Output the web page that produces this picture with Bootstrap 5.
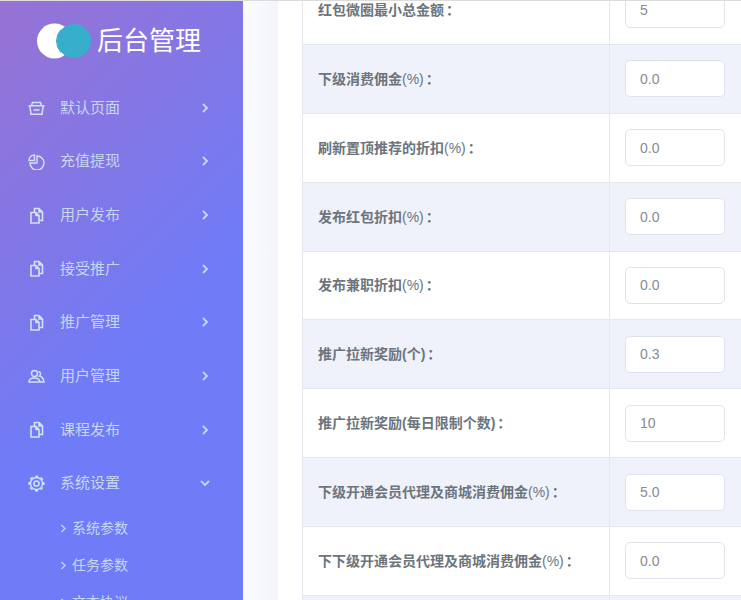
<!DOCTYPE html>
<html lang="zh-CN">
<head>
<meta charset="utf-8">
<title>后台管理</title>
<link href="https://cdn.jsdelivr.net/npm/bootstrap@5.3.0/dist/css/bootstrap.min.css" rel="stylesheet">
<style>
html,body{height:600px;overflow:hidden}
body{font-family:"Liberation Sans","Noto Sans CJK SC",sans-serif;background:#fff;border-top:1px solid #dcdcdc;margin:0}
.shell{height:599px;overflow:hidden}
.side-bar{width:243px;flex:none;background:linear-gradient(135deg,#9872d3 0%,#6f7bf7 58%,#6f7bf7 100%);overflow:hidden}
.brand-row{height:80px;padding-left:37px;gap:6px}
.brand-logo{width:54px;height:36px;flex:none}
.brand-name{font-size:26px;color:#fff;line-height:1}
.menu-item{height:53.67px;padding-left:28px;padding-right:33px;color:#c6d6ef;font-size:15px;text-decoration:none}
.menu-ico{width:17px;height:17px;flex:none;margin-right:15px}
.menu-arrow{width:10px;height:10px;flex:none}
.sub-item{height:37px;padding-left:60px;color:#c6d6ef;font-size:14px;text-decoration:none}
.sub-arrow{width:7px;height:9px;margin-right:5px;flex:none}
.grad-band{width:35px;flex:none;background:linear-gradient(90deg,#fbfbff,#f3f5fa)}
.content-pane{padding-left:24px;flex:1;min-width:0;overflow:hidden}
.cfg-table{width:530px;margin-top:-26px;margin-bottom:0;table-layout:fixed;--bs-table-border-color:#e3e8ef;--bs-table-color:#6c757d}
.cfg-table td{height:68.875px;padding:0 15px;vertical-align:middle;color:#6c757d;font-size:14px;font-weight:700}
.cfg-table td:first-child{width:307px}
.row-alt{--bs-table-bg:#eff2fa}
.cfg-table .pct{font-weight:400}
.cfg-table .colon{font-family:"Noto Sans CJK TC",sans-serif;padding-left:2px}
.cfg-input{width:100px;height:37px;border:1px solid #dfe4ec;border-radius:5px;padding:0 14px;font-size:14px;font-family:"Liberation Sans",sans-serif;color:#868c93;font-weight:400;background:#fff;box-shadow:none}
</style>
</head>
<body>
<div class="shell d-flex">
  <aside class="side-bar">
    <div class="brand-row d-flex align-items-center">
      <svg class="brand-logo" viewBox="0 0 54 36"><circle cx="17.500" cy="18" r="17.500" fill="#fff"/><circle cx="37" cy="18" r="17" fill="#38aecd"/><path d="M24 6.500a17 17 0 0 0 0 23" fill="none" stroke="#3a9fc9" stroke-width="1"/></svg>
      <span class="brand-name">后台管理</span>
    </div>
    <nav>
      <a class="menu-item d-flex align-items-center" href="#">
        <svg class="menu-ico" viewBox="0 0 17 17" fill="none" stroke="#d2e2f3" stroke-width="1.500"><path d="M3.500 6.500l1-3h8l1 3M.5 6.800h16M1.800 6.800l1.200 8.400h11l1.200-8.400M5.500 11h6"/></svg>
        <span class="flex-grow-1">默认页面</span>
        <svg class="menu-arrow" viewBox="0 0 10 10" fill="none" stroke="#c8d5f6" stroke-width="1.800"><path d="M3 1l4 4-4 4"/></svg>
      </a>
      <a class="menu-item d-flex align-items-center" href="#">
        <svg class="menu-ico" viewBox="0 0 17 17" fill="none" stroke="#d2e2f3" stroke-width="1.400"><path d="M9 3a7 7 0 1 1-7 7h7zM1 7.500a5.500 5.500 0 0 1 5.500-5.500v5.500z"/></svg>
        <span class="flex-grow-1">充值提现</span>
        <svg class="menu-arrow" viewBox="0 0 10 10" fill="none" stroke="#c8d5f6" stroke-width="1.800"><path d="M3 1l4 4-4 4"/></svg>
      </a>
      <a class="menu-item d-flex align-items-center" href="#">
        <svg class="menu-ico" viewBox="0 0 17 17" fill="none" stroke="#d2e2f3" stroke-width="1.600"><path d="M3 5.500h5l3 3v7.500H3zM8 5.500v3h3M6.500 5V1.500h4.500l3.500 3.500v8.500h-3.500M11 1.500v3.500h3.500"/></svg>
        <span class="flex-grow-1">用户发布</span>
        <svg class="menu-arrow" viewBox="0 0 10 10" fill="none" stroke="#c8d5f6" stroke-width="1.800"><path d="M3 1l4 4-4 4"/></svg>
      </a>
      <a class="menu-item d-flex align-items-center" href="#">
        <svg class="menu-ico" viewBox="0 0 17 17" fill="none" stroke="#d2e2f3" stroke-width="1.600"><path d="M3 5.500h5l3 3v7.500H3zM8 5.500v3h3M6.500 5V1.500h4.500l3.500 3.500v8.500h-3.500M11 1.500v3.500h3.500"/></svg>
        <span class="flex-grow-1">接受推广</span>
        <svg class="menu-arrow" viewBox="0 0 10 10" fill="none" stroke="#c8d5f6" stroke-width="1.800"><path d="M3 1l4 4-4 4"/></svg>
      </a>
      <a class="menu-item d-flex align-items-center" href="#">
        <svg class="menu-ico" viewBox="0 0 17 17" fill="none" stroke="#d2e2f3" stroke-width="1.600"><path d="M3 5.500h5l3 3v7.500H3zM8 5.500v3h3M6.500 5V1.500h4.500l3.500 3.500v8.500h-3.500M11 1.500v3.500h3.500"/></svg>
        <span class="flex-grow-1">推广管理</span>
        <svg class="menu-arrow" viewBox="0 0 10 10" fill="none" stroke="#c8d5f6" stroke-width="1.800"><path d="M3 1l4 4-4 4"/></svg>
      </a>
      <a class="menu-item d-flex align-items-center" href="#">
        <svg class="menu-ico" viewBox="0 0 17 17" fill="none" stroke="#d2e2f3" stroke-width="1.500"><circle cx="6.500" cy="5.500" r="3"/><path d="M1 14c0-2.800 2.500-4 5.500-4s5 1.200 5.500 4zM10.500 3.500a2.500 2.500 0 0 1 1 4.500c2.500.5 4 2.500 4.500 6h-4"/></svg>
        <span class="flex-grow-1">用户管理</span>
        <svg class="menu-arrow" viewBox="0 0 10 10" fill="none" stroke="#c8d5f6" stroke-width="1.800"><path d="M3 1l4 4-4 4"/></svg>
      </a>
      <a class="menu-item d-flex align-items-center" href="#">
        <svg class="menu-ico" viewBox="0 0 17 17" fill="none" stroke="#d2e2f3" stroke-width="1.600"><path d="M3 5.500h5l3 3v7.500H3zM8 5.500v3h3M6.500 5V1.500h4.500l3.500 3.500v8.500h-3.500M11 1.500v3.500h3.500"/></svg>
        <span class="flex-grow-1">课程发布</span>
        <svg class="menu-arrow" viewBox="0 0 10 10" fill="none" stroke="#c8d5f6" stroke-width="1.800"><path d="M3 1l4 4-4 4"/></svg>
      </a>
      <a class="menu-item d-flex align-items-center" href="#">
        <svg class="menu-ico" viewBox="0 0 17 17" fill="none" stroke="#d2e2f3"><circle cx="8.500" cy="8.500" r="2.600" stroke-width="1.500"/><circle cx="8.500" cy="8.500" r="6" stroke-width="1.400"/><circle cx="8.500" cy="8.500" r="7.300" stroke-width="1.600" stroke-dasharray="3.200 2.533" stroke-dashoffset="1.600"/></svg>
        <span class="flex-grow-1">系统设置</span>
        <svg class="menu-arrow" viewBox="0 0 10 10" fill="none" stroke="#c8d5f6" stroke-width="1.800"><path d="M1 3l4 4 4-4"/></svg>
      </a>
      <a class="sub-item d-flex align-items-center" href="#"><svg class="sub-arrow" viewBox="0 0 7 9" fill="none" stroke="#c8d5f6" stroke-width="1.300"><path d="M1.500 1l3.500 3.500-3.500 3.500"/></svg>系统参数</a>
      <a class="sub-item d-flex align-items-center" href="#"><svg class="sub-arrow" viewBox="0 0 7 9" fill="none" stroke="#c8d5f6" stroke-width="1.300"><path d="M1.500 1l3.500 3.500-3.500 3.500"/></svg>任务参数</a>
      <a class="sub-item d-flex align-items-center" href="#"><svg class="sub-arrow" viewBox="0 0 7 9" fill="none" stroke="#c8d5f6" stroke-width="1.300"><path d="M1.500 1l3.500 3.500-3.500 3.500"/></svg>文本协议</a>
    </nav>
  </aside>
  <div class="grad-band"></div>
  <main class="content-pane">
    <table class="table table-bordered cfg-table">
      <tbody>
        <tr><td>红包微圈最小总金额<span class="colon">：</span></td><td><input class="form-control cfg-input" value="5"></td></tr>
        <tr class="row-alt"><td>下级消费佣金<span class="pct">(%)</span><span class="colon">：</span></td><td><input class="form-control cfg-input" value="0.0"></td></tr>
        <tr><td>刷新置顶推荐的折扣<span class="pct">(%)</span><span class="colon">：</span></td><td><input class="form-control cfg-input" value="0.0"></td></tr>
        <tr class="row-alt"><td>发布红包折扣<span class="pct">(%)</span><span class="colon">：</span></td><td><input class="form-control cfg-input" value="0.0"></td></tr>
        <tr><td>发布兼职折扣<span class="pct">(%)</span><span class="colon">：</span></td><td><input class="form-control cfg-input" value="0.0"></td></tr>
        <tr class="row-alt"><td>推广拉新奖励(个)<span class="colon">：</span></td><td><input class="form-control cfg-input" value="0.3"></td></tr>
        <tr><td>推广拉新奖励(每日限制个数)<span class="colon">：</span></td><td><input class="form-control cfg-input" value="10"></td></tr>
        <tr class="row-alt"><td>下级开通会员代理及商城消费佣金<span class="pct">(%)</span><span class="colon">：</span></td><td><input class="form-control cfg-input" value="5.0"></td></tr>
        <tr><td>下下级开通会员代理及商城消费佣金<span class="pct">(%)</span><span class="colon">：</span></td><td><input class="form-control cfg-input" value="0.0"></td></tr>
        <tr class="row-alt"><td></td><td></td></tr>
      </tbody>
    </table>
  </main>
</div>
<script src="https://cdn.jsdelivr.net/npm/bootstrap@5.3.0/dist/js/bootstrap.bundle.min.js"></script>
</body>
</html>
